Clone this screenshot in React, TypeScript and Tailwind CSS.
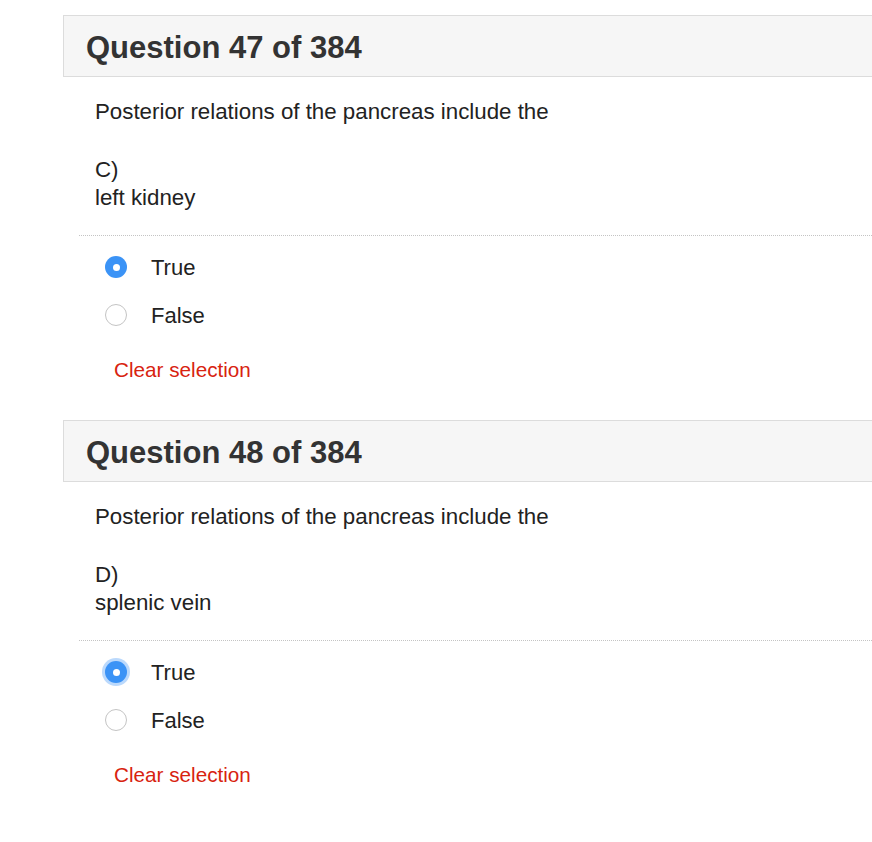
import { useState } from 'react';

type Q = { num: number; letter: string; answer: string; focused?: boolean };

const questions: Q[] = [
  { num: 47, letter: 'C)', answer: 'left kidney' },
  { num: 48, letter: 'D)', answer: 'splenic vein', focused: true },
];

function Radio({ checked, focused }: { checked: boolean; focused?: boolean }) {
  if (checked) {
    return (
      <span
        className={
          'w-[22px] h-[22px] rounded-full bg-[#3b93f6] flex items-center justify-center shrink-0 ' +
          (focused ? 'shadow-[0_0_0_3px_rgba(59,147,246,0.35)]' : '')
        }
      >
        <span className="w-[7px] h-[7px] rounded-full bg-white" />
      </span>
    );
  }
  return <span className="w-[22px] h-[22px] rounded-full border-[1.5px] border-[#c4c4c4] bg-white shrink-0" />;
}

function QuestionBlock({ q }: { q: Q }) {
  const [value, setValue] = useState<'true' | 'false' | null>('true');

  return (
    <section className="mb-[38px]">
      <div className="h-[62px] border border-r-0 border-[#dcdcdc] bg-[#f6f6f6] flex items-center pl-[22px] pt-[3px]">
        <h2 className="text-[31px] font-bold text-[#333] leading-none">
          Question {q.num} of 384
        </h2>
      </div>

      <div className="pl-[16px]">
        <div className="pl-[16px] text-[22.3px] leading-[28px] text-[#222]">
          <p className="mt-[21px]">Posterior relations of the pancreas include the</p>
          <p className="mt-[30px]">{q.letter}</p>
          <p>{q.answer}</p>
        </div>

        <div className="mt-[23px] border-t border-dotted border-[#c4c4c4]" />

        <div className="mt-[7px]">
          {(['true', 'false'] as const).map((v) => (
            <label
              key={v}
              onClick={() => setValue(v)}
              className="h-[48px] flex items-center pl-[26px] gap-[24px] cursor-pointer"
            >
              <Radio checked={value === v} focused={q.focused} />
              <span className="text-[22px] text-[#222]">{v === 'true' ? 'True' : 'False'}</span>
            </label>
          ))}
        </div>

        <button
          onClick={() => setValue(null)}
          className="mt-[19px] ml-[35px] h-[24px] flex items-center text-[20.7px] text-[#d8230f]"
        >
          Clear selection
        </button>
      </div>
    </section>
  );
}

export default function App() {
  return (
    <div className="min-h-[842px] bg-white overflow-hidden pl-[63px] pt-[15px] font-['Liberation_Sans',Arial,sans-serif]">
      {questions.map((q) => (
        <QuestionBlock key={q.num} q={q} />
      ))}
    </div>
  );
}
